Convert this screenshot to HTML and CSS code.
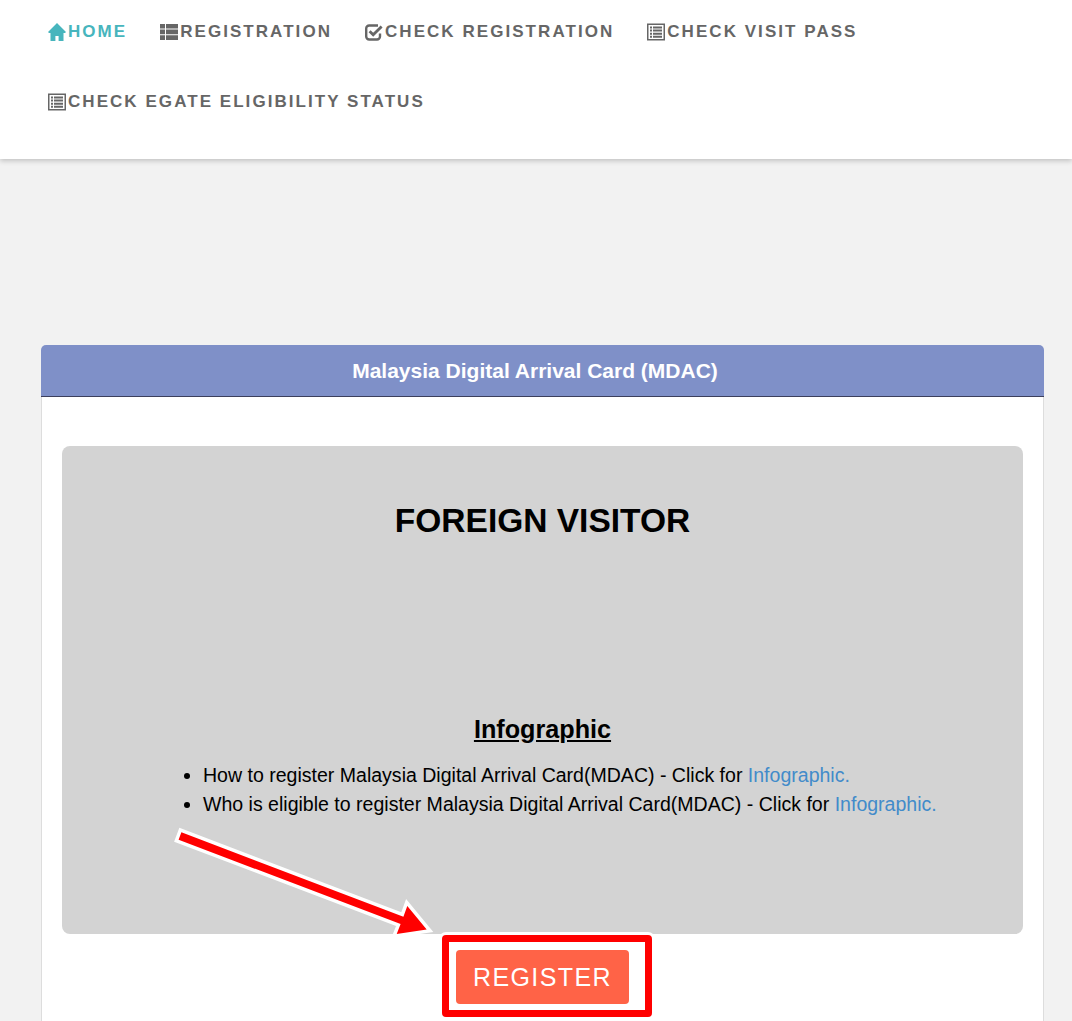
FILE: index.html
```html
<!DOCTYPE html>
<html lang="en">
  <head>
    <meta charset="UTF-8" />
    <meta name="viewport" content="width=device-width, initial-scale=1.0" />
    <title>Malaysia Digital Arrival Card (MDAC)</title>
    <link rel="stylesheet" href="styles.css">
  </head>
  <body>
    <svg class="iconDefs" width="0" height="0">
      <symbol id="iconHome" viewBox="0 0 18 18">
        <path d="M9 0 L18 9 L17 10 H15.5 V18 H10.6 V13 H7.4 V18 H2.5 V10 H1 L0 9 Z" />
      </symbol>
      <symbol id="iconGrid" viewBox="0 0 18 18">
        <path d="M0 1 H5 V5.6 H0 Z M6 1 H18 V5.6 H6 Z M0 6.6 H5 V11.2 H0 Z M6 6.6 H18 V11.2 H6 Z M0 12.2 H5 V17 H0 Z M6 12.2 H18 V17 H6 Z" />
      </symbol>
      <symbol id="iconCheck" viewBox="0 0 18 18">
        <path d="M15 10.5 V13.5 A3 3 0 0 1 12 16.5 H4.2 A3 3 0 0 1 1.2 13.5 V5.5 A3 3 0 0 1 4.2 2.5 H13" fill="none" stroke="currentColor" stroke-width="2.4" />
        <path d="M4.6 8.2 L8.2 11.8 L16.6 3.4" fill="none" stroke="currentColor" stroke-width="2.8" />
      </symbol>
      <symbol id="iconList" viewBox="0 0 18 18">
        <path fill-rule="evenodd" d="M0 0.5 H18 V17.5 H0 Z M1.5 2 V16 H16.5 V2 Z" />
        <path d="M3 3.5 H5 V5.5 H3 Z M6 3.5 H15 V5.5 H6 Z M3 6.6 H5 V8.6 H3 Z M6 6.6 H15 V8.6 H6 Z M3 9.7 H5 V11.7 H3 Z M6 9.7 H15 V11.7 H6 Z M3 12.8 H5 V14.8 H3 Z M6 12.8 H15 V14.8 H6 Z" />
      </symbol>
    </svg>

    <nav class="topNav">
      <a class="navItem active" href="#"><svg class="navIcon"><use href="#iconHome" /></svg>HOME</a>
      <a class="navItem" href="#"><svg class="navIcon"><use href="#iconGrid" /></svg>REGISTRATION</a>
      <a class="navItem" href="#"><svg class="navIcon"><use href="#iconCheck" /></svg>CHECK REGISTRATION</a>
      <a class="navItem" href="#"><svg class="navIcon"><use href="#iconList" /></svg>CHECK VISIT PASS</a>
      <a class="navItem" href="#"><svg class="navIcon"><use href="#iconList" /></svg>CHECK EGATE ELIGIBILITY STATUS</a>
    </nav>

    <main class="content">
      <section class="panel">
        <h2 class="panelTitle">Malaysia Digital Arrival Card (MDAC)</h2>
        <div class="panelBody">
          <div class="visitorBox">
            <h1>FOREIGN VISITOR</h1>
            <h3>Infographic</h3>
            <ul class="infoList">
              <li>How to register Malaysia Digital Arrival Card(MDAC) - Click for <a href="#">Infographic.</a></li>
              <li>Who is eligible to register Malaysia Digital Arrival Card(MDAC) - Click for <a href="#">Infographic.</a></li>
            </ul>
          </div>
          <div class="registerRow">
            <a class="registerBtn" href="#">REGISTER<span class="redMark"></span></a>
          </div>
          <!-- arrow drawn on top of the screenshot -->
          <svg class="arrow" width="250" height="110" viewBox="0 0 250 110">
            <polygon points="0.4,5.3 222.4,89.7 226.3,79 245.7,102.5 215.7,107 219.6,97.1 -2.4,12.7" class="arrowShape" />
          </svg>
        </div>
      </section>
    </main>
  </body>
</html>
```

FILE: styles.css
```css
* {
  box-sizing: border-box;
}

html,
body {
  height: 100%;
  overflow: hidden;
}

body {
  margin: 0;
  background: #f2f2f2;
  font-family: "Liberation Sans", Arial, sans-serif;
  color: #000;
}

.iconDefs {
  display: block;
  position: absolute;
}

.topNav {
  display: flex;
  flex-wrap: wrap;
  align-content: flex-start;
  column-gap: 33px;
  height: 159px;
  padding: 0 140px 0 48px;
  background: #fff;
  box-shadow: 0 2px 5px rgba(0, 0, 0, 0.2);
}

.navItem {
  display: flex;
  align-items: center;
  height: 70px;
  padding-bottom: 6px;
  color: #666;
  font-size: 17px;
  font-weight: bold;
  letter-spacing: 2.05px;
  text-decoration: none;
  white-space: nowrap;
}

.navItem.active {
  color: #47b5bd;
}

.navIcon {
  width: 18px;
  height: 18px;
  margin-right: 2px;
  fill: currentColor;
}

.content {
  padding: 186px 28px 0 41px;
}

.panelTitle {
  margin: 0;
  height: 52px;
  padding-right: 15px;
  line-height: 51px;
  background: #7f90c8;
  border-bottom: 1px solid #3c3f5c;
  border-radius: 5px 5px 0 0;
  color: #fff;
  font-size: 21px;
  font-weight: bold;
  text-align: center;
}

.panelBody {
  position: relative;
  height: 700px;
  padding: 49px 20px 0;
  background: #fff;
  border: 1px solid #ddd;
  border-top: none;
}

.visitorBox {
  height: 488px;
  padding-top: 55px;
  background: #d3d3d3;
  border-radius: 8px;
}

.visitorBox h1 {
  margin: 0;
  font-size: 33.5px;
  line-height: 40px;
  text-align: center;
}

.visitorBox h3 {
  margin: 172px 0 0;
  font-size: 25.2px;
  line-height: 32px;
  text-align: center;
  text-decoration: underline;
}

.infoList {
  margin: 16px 0 0;
  padding-left: 141px;
  font-size: 19.55px;
  line-height: 29px;
}

.infoList a {
  color: #428bca;
  text-decoration: none;
}

.registerRow {
  display: flex;
  justify-content: center;
  margin-top: 16px;
}

.registerBtn {
  position: relative;
  display: block;
  width: 173px;
  height: 54px;
  background: #ff6347;
  border-radius: 4px;
  color: #fff;
  font-size: 25px;
  letter-spacing: 1.4px;
  line-height: 54px;
  text-align: center;
  text-decoration: none;
}

/* red box someone put round the button */
.redMark {
  position: absolute;
  top: -15px;
  left: -14px;
  width: 210px;
  height: 82px;
  border: 7.5px solid #f00;
  border-radius: 4px;
  box-shadow: 0 0 0 3px #fff;
}

.arrow {
  position: absolute;
  top: 430px;
  left: 139px;
  overflow: visible;
}

.arrowShape {
  fill: #f00;
  stroke: #fff;
  stroke-width: 7;
  paint-order: stroke;
}
```
